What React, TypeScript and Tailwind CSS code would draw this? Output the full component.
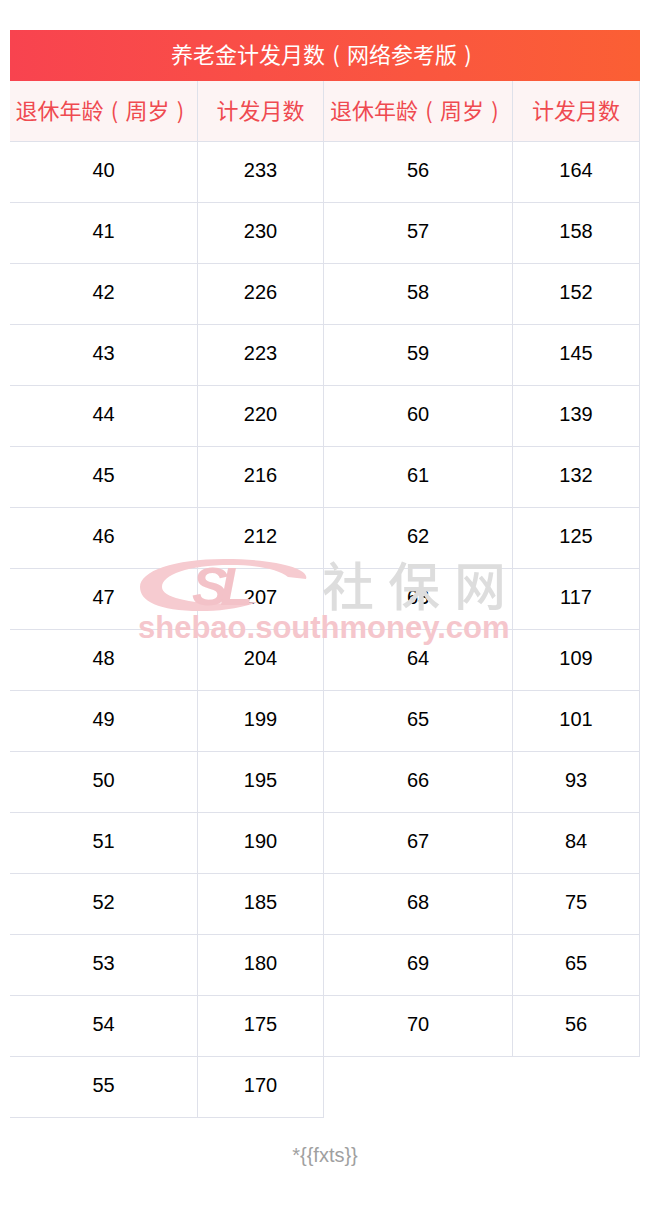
const left: [number, number][] = [
  [40, 233], [41, 230], [42, 226], [43, 223], [44, 220], [45, 216], [46, 212], [47, 207],
  [48, 204], [49, 199], [50, 195], [51, 190], [52, 185], [53, 180], [54, 175], [55, 170],
]

const right: [number, number][] = [
  [56, 164], [57, 158], [58, 152], [59, 145], [60, 139], [61, 132], [62, 125], [63, 117],
  [64, 109], [65, 101], [66, 93], [67, 84], [68, 75], [69, 65], [70, 56],
]

const cjk = "font-['Noto_Sans_CJK_SC','Noto_Sans',sans-serif]"
const num = "font-['Liberation_Sans',Arial,sans-serif]"

// 全角括号居中显示
function P({ c }: { c: string }) {
  return <span className="inline-block w-[1em] text-center">{c}</span>
}

function Half({ rows, w1, w2 }: { rows: [number, number][]; w1: string; w2: string }) {
  return (
    <div className="flex flex-col">
      <div className={`flex h-[61px] border-b border-[#dfe1ea] bg-[#fdf4f4] text-[22px] text-[#ef4a50] ${cjk}`}>
        <div className={`${w1} flex items-center justify-center pb-[3px] border-r border-[#dfe1ea]`}>
          <span>退休年龄<P c="(" />周岁<P c=")" /></span>
        </div>
        <div className={`${w2} flex items-center justify-center pb-[3px] border-r border-[#dfe1ea]`}>计发月数</div>
      </div>
      {rows.map(([age, months]) => (
        <div key={age} className={`flex h-[61px] border-b border-[#dfe1ea] text-[20px] text-black ${num}`}>
          <div className={`${w1} flex items-center justify-center pb-[4px] border-r border-[#dfe1ea]`}>{age}</div>
          <div className={`${w2} flex items-center justify-center pb-[4px] border-r border-[#dfe1ea]`}>{months}</div>
        </div>
      ))}
    </div>
  )
}

function Watermark() {
  return (
    <div className="pointer-events-none absolute left-[128px] top-[524px] w-[390px] h-[100px]">
      <div className="flex items-center h-[60px]">
        <div className="relative w-[172px] h-[58px]">
          <svg width="172" height="58" viewBox="0 0 172 58" className="absolute left-0 top-0">
            <path
              fill="#f6cbd0"
              d="M86 4 C 140 4, 172 14, 168 24 L 150 22 C 140 14, 120 10, 92 10 C 50 10, 24 20, 24 32 C 24 44, 60 50, 100 48 L 120 47 C 100 54, 80 56, 62 56 C 20 56, 2 46, 2 32 C 2 16, 36 4, 86 4 Z"
            />
          </svg>
          <span className={`absolute left-[54px] top-[4px] text-[54px] leading-none font-bold italic tracking-[-8px] text-[#f3c2c8] ${num}`}>SL</span>
        </div>
        <span className={`ml-[12px] text-[52px] leading-none font-medium tracking-[14px] text-[#dddddd] ${cjk}`}>社保网</span>
      </div>
      <div className={`mt-[-2px] text-[31px] font-bold leading-none text-[#f5c6cc] ${num}`}>shebao.southmoney.com</div>
    </div>
  )
}

export default function App() {
  return (
    <div className="w-[650px] h-[1210px] bg-white pt-[30px]">
      <div className="relative mx-[10px]">
        <div className={`h-[51px] flex items-center justify-center pb-[4px] bg-gradient-to-r from-[#f8434f] to-[#fb5f34] text-white text-[22px] ${cjk}`}>
          <span>养老金计发月数<P c="(" />网络参考版<P c=")" /></span>
        </div>
        <div className="flex items-start">
          <Half rows={left} w1="w-[188px]" w2="w-[126px]" />
          <Half rows={right} w1="w-[189px]" w2="w-[127px]" />
        </div>
        <Watermark />
      </div>
      <div className={`mt-[22px] text-center text-[20px] text-[#a0a0a0] ${num}`}>*{"{{fxts}}"}</div>
    </div>
  )
}
